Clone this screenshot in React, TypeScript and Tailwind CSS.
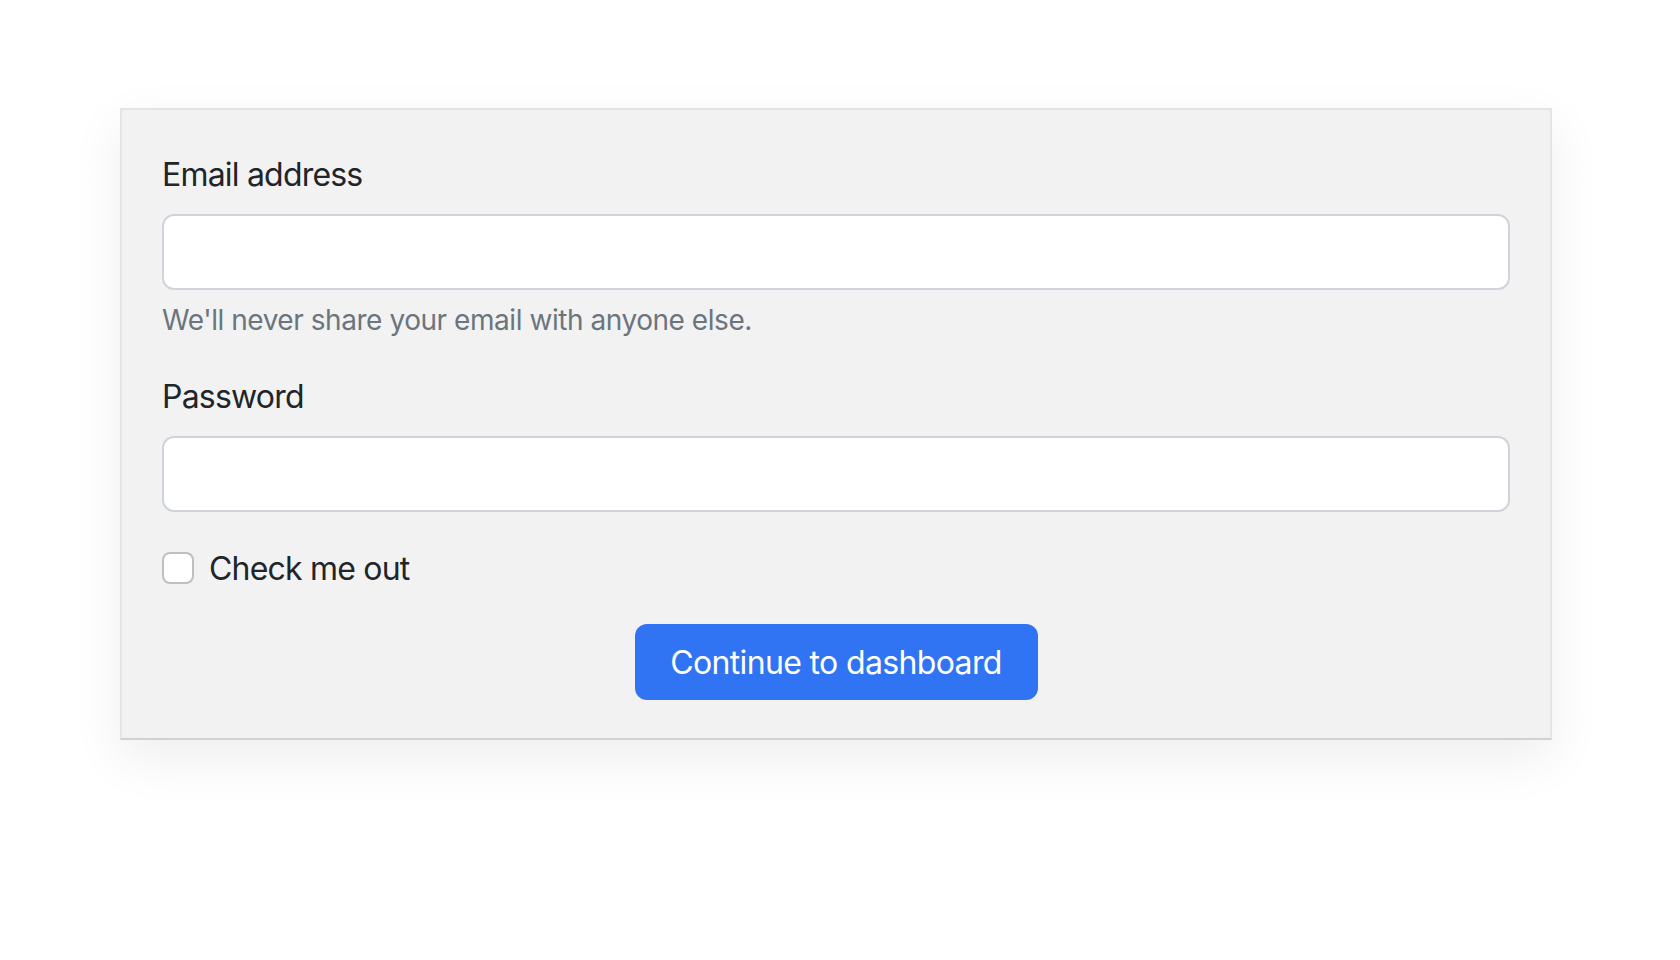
import { useState } from 'react';

const App = () => {
  const [checked, setChecked] = useState(false);

  return (
    <div className="min-h-screen w-full bg-white pt-[108px] pl-[120px] font-['Inter','Liberation_Sans',sans-serif] text-[#212529]">
      {/* Form card */}
      <form
        className="w-[1432px] bg-[#f2f2f2] border-2 border-[#e4e4e4] border-b-[#d0d0d0] px-[40px] pt-[40px] pb-[38px] shadow-[0_18px_50px_rgba(0,0,0,0.07)]"
        onSubmit={(e) => e.preventDefault()}
      >
        <div className="mb-[32px]">
          <label className="block mb-[16px] pt-[1px] h-[48px] text-[32px] leading-[48px] tracking-[-0.8px]">Email address</label>
          <input
            type="email"
            className="block w-full h-[76px] bg-white border-2 border-[#ced4da] rounded-[12px] px-[24px] text-[32px] outline-none"
          />
          <div className="mt-[8px] pt-[1px] h-[42px] text-[28px] leading-[42px] text-[#6c757d] tracking-[-0.45px]">
            We'll never share your email with anyone else.
          </div>
        </div>

        <div className="mb-[32px]">
          <label className="block mb-[16px] pt-[1px] h-[48px] text-[32px] leading-[48px] tracking-[-0.8px]">Password</label>
          <input
            type="password"
            className="block w-full h-[76px] bg-white border-2 border-[#ced4da] rounded-[12px] px-[24px] text-[32px] outline-none"
          />
        </div>

        <div className="mb-[32px] flex items-start h-[48px]">
          <button
            type="button"
            onClick={() => setChecked(!checked)}
            className="mt-[8px] w-[32px] h-[32px] shrink-0 bg-white border-2 border-[#bfbfbf] rounded-[8px]"
          />
          <span className="ml-[15px] pt-[1px] text-[32px] leading-[48px] tracking-[-0.8px]">Check me out</span>
        </div>

        <div className="flex justify-center">
          <button
            type="submit"
            className="w-[403px] h-[76px] pt-[2px] bg-[#3174f3] text-white rounded-[12px] text-[32px] leading-[48px] tracking-[-0.65px]"
          >
            Continue to dashboard
          </button>
        </div>
      </form>
    </div>
  );
};

export default App;
